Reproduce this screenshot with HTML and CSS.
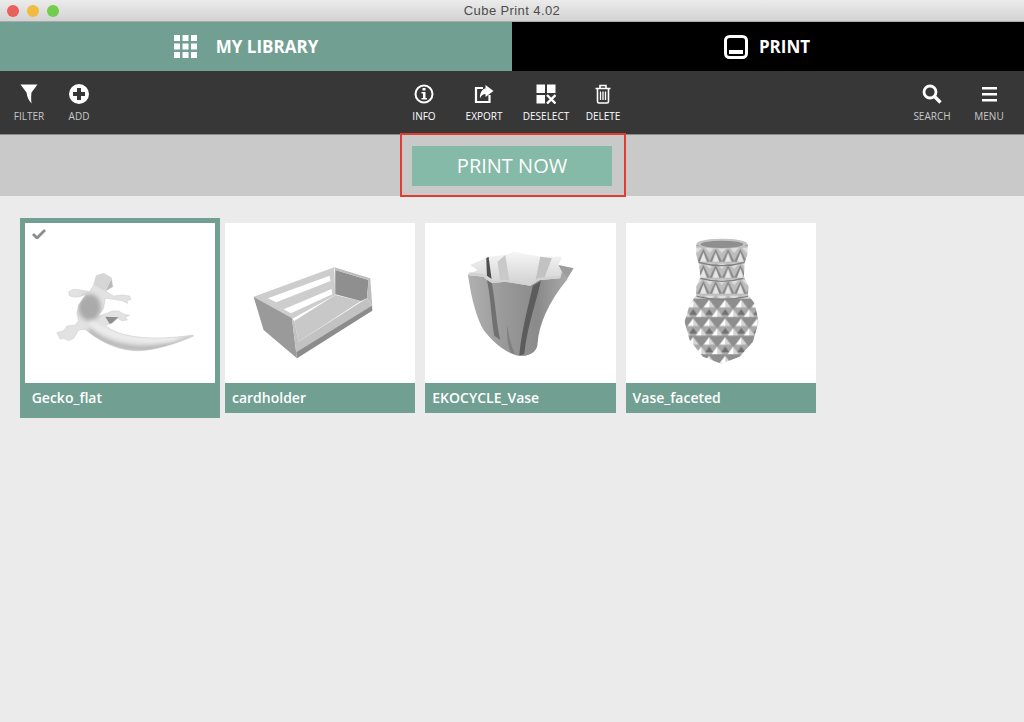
FILE: index.html
```html
<!DOCTYPE html>
<html lang="en">
<head>
    <meta charset="UTF-8">
    <title>Cube Print 4.02</title>
    <link rel="stylesheet" href="styles.css">
</head>
<body>
    <!-- Title bar -->
    <div class="titlebar">
        <div class="lights">
            <span class="light red"></span>
            <span class="light yellow"></span>
            <span class="light green"></span>
        </div>
        <div class="title">Cube Print 4.02</div>
    </div>

    <!-- Tabs -->
    <div class="tabs">
        <div class="tab tab-library">
            <svg class="tab-icon" width="23" height="23" viewBox="0 0 23 23" fill="#fff">
                <rect x="0" y="0" width="6" height="6"/><rect x="8.5" y="0" width="6" height="6"/><rect x="17" y="0" width="6" height="6"/>
                <rect x="0" y="8.500" width="6" height="6"/><rect x="8.5" y="8.500" width="6" height="6"/><rect x="17" y="8.500" width="6" height="6"/>
                <rect x="0" y="17" width="6" height="6"/><rect x="8.5" y="17" width="6" height="6"/><rect x="17" y="17" width="6" height="6"/>
            </svg>
            <span>MY LIBRARY</span>
        </div>
        <div class="tab tab-print">
            <svg class="tab-icon" width="24" height="24" viewBox="0 0 24 24">
                <rect x="1.500" y="1.500" width="21" height="21" rx="4" fill="none" stroke="#fff" stroke-width="3"/>
                <rect x="5" y="15" width="14" height="4" fill="#fff"/>
            </svg>
            <span>PRINT</span>
        </div>
    </div>

    <!-- Toolbar -->
    <div class="toolbar">
        <div class="tool-group">
            <div class="tool">
                <svg width="18" height="20" viewBox="0 0 18 20" fill="#fff"><path d="M0.500 0.500H17.500L11.500 8.500C11 12 11 16 11.500 19.500C9 17 7 13 6.500 8.500Z"/></svg>
                <span>FILTER</span>
            </div>
            <div class="tool">
                <svg width="20" height="20" viewBox="0 0 20 20"><circle cx="10" cy="10" r="10" fill="#fff"/><path d="M8 4H12V8H16V12H12V16H8V12H4V8H8Z" fill="#373737"/></svg>
                <span>ADD</span>
            </div>
        </div>
        <div class="tool-group tool-group-center">
            <div class="tool tool-on">
                <svg width="20" height="20" viewBox="0 0 20 20"><circle cx="10" cy="10" r="8.500" fill="none" stroke="#fff" stroke-width="2"/><rect x="8.500" y="4" width="3" height="2.500" fill="#fff"/><path d="M7.500 8H11.500V14H13V15.500H7.500V14H9V9.500H7.500Z" fill="#fff"/></svg>
                <span>INFO</span>
            </div>
            <div class="tool tool-on">
                <svg width="20" height="20" viewBox="0 0 20 20"><path d="M9 4H2V18H15.500V11" fill="none" stroke="#fff" stroke-width="2.200"/><path d="M11.500 1L19.500 7L11.500 13V10C9 10 7 11.500 6 14.500C5.500 9.500 8 5 11.500 4.500Z" fill="#fff"/></svg>
                <span>EXPORT</span>
            </div>
            <div class="tool tool-wide tool-on">
                <svg width="20" height="20" viewBox="0 0 20 20" fill="#fff"><rect x="0.500" y="0.500" width="8.500" height="8.500"/><rect x="11" y="0.500" width="8.500" height="8.500"/><rect x="0.500" y="11" width="8.500" height="8.500"/><path d="M11 11L19.500 19.500M19.500 11L11 19.500" stroke="#fff" stroke-width="2.400"/></svg>
                <span>DESELECT</span>
            </div>
            <div class="tool tool-narrow tool-on">
                <svg width="16" height="20" viewBox="0 0 16 20"><path d="M0.500 4.500H15.500M5 4V1.500H11V4" fill="none" stroke="#fff" stroke-width="1.600"/><path d="M2.500 5V17.500Q2.500 19 4 19H12Q13.500 19 13.500 17.500V5" fill="none" stroke="#fff" stroke-width="1.600"/><path d="M5.500 7.500V16M8 7.500V16M10.500 7.500V16" stroke="#fff" stroke-width="1.300"/></svg>
                <span>DELETE</span>
            </div>
        </div>
        <div class="tool-group tool-group-right">
            <div class="tool tool-wide">
                <svg width="20" height="20" viewBox="0 0 20 20"><circle cx="8" cy="8" r="6" fill="none" stroke="#fff" stroke-width="2.800"/><path d="M12.500 12.500L18.500 18.500" stroke="#fff" stroke-width="3.400"/></svg>
                <span>SEARCH</span>
            </div>
            <div class="tool tool-narrow">
                <svg width="15" height="20" viewBox="0 0 15 20" fill="#fff"><rect y="3" width="15" height="2.500"/><rect y="9" width="15" height="2.500"/><rect y="15" width="15" height="2.500"/></svg>
                <span>MENU</span>
            </div>
        </div>
    </div>

    <!-- Print banner -->
    <div class="banner">
        <button class="print-now">PRINT NOW</button>
        <div class="callout"></div>
    </div>

    <!-- Models -->
    <div class="library">
        <div class="card selected">
            <div class="thumb">
                <svg class="check" width="14" height="11" viewBox="0 0 14 11"><path d="M1 6L5 10L13 2" fill="none" stroke="#8c8c8c" stroke-width="2.800"/></svg>
                <svg class="model" viewBox="45 39 570 480">
                    <defs>
                        <filter id="soft" x="-10%" y="-10%" width="120%" height="120%"><feGaussianBlur stdDeviation="1.300"/></filter>
                        <filter id="softer" x="-30%" y="-30%" width="160%" height="160%"><feGaussianBlur stdDeviation="6"/></filter>
                        <path id="gecko-path" d="M258 197L280 190L303 203L308 230L285 243L310 258L335 255L358 258L362 268L350 272L352 280L335 272L310 268L285 265L280 295L265 318L290 310L305 303L325 303L340 312L358 316L345 322L352 330L335 332L322 325L305 340L285 345C320 380 420 395 548 375L550 378C490 405 420 425 370 422C310 418 255 385 225 358L205 360L190 385L175 392L160 385L150 388L140 368L160 362L170 348L195 345L205 332L200 310L205 285L225 255L232 250L215 258L195 262L178 258L175 245L190 238L210 240L238 245L250 225Z"/>
                        <clipPath id="gecko-shape"><use href="#gecko-path"/></clipPath>
                    </defs>
                    <g clip-path="url(#gecko-shape)">
                        <rect x="130" y="180" width="430" height="250" fill="#e2e2e2"/>
                        <ellipse cx="238" cy="292" rx="34" ry="40" fill="#aaa" filter="url(#softer)"/>
                        <path d="M235 360C300 420 420 435 550 385" fill="none" stroke="#a8a8a8" stroke-width="12" filter="url(#softer)"/>
                        <path d="M240 335C290 380 380 395 500 385" fill="none" stroke="#f6f6f6" stroke-width="8" filter="url(#softer)"/>
                        <path d="M285 245L305 205L308 235Z" fill="#b9b9b9"/>
                        <path d="M285 320L300 345L325 322Z" fill="#8d8d8d" filter="url(#soft)"/>
                        <path d="M258 197L280 190L303 203L285 243L250 225Z" fill="#d6d6d6" filter="url(#soft)"/>
                    </g>
                    <use href="#gecko-path" fill="none" stroke="#c8c8c8" stroke-width="1.500"/>
                </svg>
            </div>
            <div class="card-name">Gecko_flat</div>
        </div>
        <div class="card">
            <div class="thumb">
                <svg class="model" viewBox="15 24 570 480">
                    <g filter="url(#soft)">
                        <path d="M100 245L342 157L345 240L215 312Z" fill="#cdcdcd"/>
                        <path d="M143 250L328 182L331 198L168 262Z" fill="#fff"/>
                        <path d="M190 283L334 222L336 238L212 295Z" fill="#fff"/>
                        <path d="M222 318L345 240L422 258L235 380Z" fill="#c8c8c8"/>
                        <path d="M345 165L445 195L440 250L422 258L345 238Z" fill="#8f8f8f"/>
                        <path d="M342 157L450 190L456 272L440 250L445 195L345 165Z" fill="#bdbdbd"/>
                        <path d="M100 245L215 310L230 430L130 345Z" fill="#9a9a9a"/>
                        <path d="M215 310L222 318L235 380L440 250L456 272L456 285L230 430Z" fill="#c2c2c2"/>
                        <path d="M230 430L228 412L455 272L456 287Z" fill="#8c8c8c"/>
                    </g>
                </svg>
            </div>
            <div class="card-name">cardholder</div>
        </div>
        <div class="card">
            <div class="thumb">
                <svg class="model" viewBox="15 24 570 480">
                    <defs>
                        <linearGradient id="vase-side" x1="0" y1="0" x2="1" y2="0"><stop offset="0" stop-color="#b0b0b0"/><stop offset="0.350" stop-color="#9a9a9a"/><stop offset="0.700" stop-color="#8a8a8a"/><stop offset="1" stop-color="#aaa"/></linearGradient>
                        <linearGradient id="vase-inner" x1="0" y1="0" x2="0" y2="1"><stop offset="0" stop-color="#f6f6f6"/><stop offset="1" stop-color="#d0d0d0"/></linearGradient>
                    </defs>
                    <g filter="url(#soft)">
                        <path d="M150 150L205 125L255 120L280 110L360 125L425 125L415 150L460 160L440 192L400 190L355 195L330 212L255 200L210 205L190 185L143 180L172 165Z" fill="url(#vase-inner)"/>
                        <path d="M205 125L214 192L200 182L198 130Z" fill="#4f4f4f"/>
                        <path d="M255 120L268 200L240 202L232 140Z" fill="#c9c9c9"/>
                        <path d="M360 125L345 200L372 190L395 130Z" fill="#c2c2c2"/>
                        <path d="M415 150L460 160L440 192L425 170Z" fill="#9d9d9d"/>
                        <path d="M143 180L190 185L210 205L255 200L330 212L358 195L420 190L425 170L442 192C385 260 355 330 352 385C352 405 335 425 300 423C265 420 220 385 190 345C170 310 155 260 143 180Z" fill="url(#vase-side)"/>
                        <path d="M143 180L190 185L210 205L255 200L330 212L358 195L420 190L420 183L355 188L330 205L255 194L210 198L192 178L148 172Z" fill="#d2d2d2"/>
                        <path d="M200 195L215 205C225 260 228 320 240 375L222 362C212 300 212 250 200 195Z" fill="#707070"/>
                        <path d="M338 212L362 198C345 270 320 340 312 418L297 421C305 340 325 270 338 212Z" fill="#5c5c5c"/>
                        <path d="M262 330C265 370 275 395 285 418L272 413C262 390 258 360 262 330Z" fill="#808080"/>
                    </g>
                </svg>
            </div>
            <div class="card-name">EKOCYCLE_Vase</div>
        </div>
        <div class="card">
            <div class="thumb">
                <svg class="model" viewBox="15 24 570 480">
                    <defs>
                        <pattern id="facets-neck" x="228" y="98" width="37" height="48" patternUnits="userSpaceOnUse">
                            <rect width="37" height="48" fill="#bdbdbd"/>
                            <path d="M18.500 4L37 42H0Z" fill="#858585"/>
                            <path d="M18.500 14L29 42H8Z" fill="#e6e6e6"/>
                            <path d="M0 0H14L0 16ZM37 0H23L37 16Z" fill="#dedede"/>
                        </pattern>
                        <pattern id="facets-belly" x="192" y="252" width="48" height="56" patternUnits="userSpaceOnUse">
                            <rect width="48" height="56" fill="#8e8e8e"/>
                            <path d="M24 2V26H6Z" fill="#fff"/>
                            <path d="M24 2L42 26H24Z" fill="#d6d6d6"/>
                            <path d="M0 30L18 54H0Z" fill="#d6d6d6"/>
                            <path d="M48 30V54H30Z" fill="#fff"/>
                            <path d="M6 26H42L48 30L30 54L24 56L18 54L0 30Z" fill="#a8a8a8"/>
                            <path d="M24 30L36 48H12Z" fill="#6f6f6f"/>
                        </pattern>
                        <clipPath id="vase-shape">
                            <path d="M225 88L380 88L378 120L370 145L368 185L382 215L380 240L400 265L412 320L395 380L355 425L300 446L245 425L205 375L190 320L205 270L225 240L225 215L238 185L232 145L225 120Z"/>
                        </clipPath>
                    </defs>
                    <g filter="url(#soft)">
                        <g clip-path="url(#vase-shape)">
                            <rect x="180" y="80" width="240" height="170" fill="url(#facets-neck)"/>
                            <rect x="180" y="250" width="240" height="200" fill="url(#facets-belly)"/>
                        </g>
                        <path d="M232 142Q302 162 370 142M238 190Q302 208 366 190M226 244Q302 262 380 244" fill="none" stroke="#808080" stroke-width="4"/>
                        <ellipse cx="302" cy="86" rx="76" ry="15" fill="#c4c4c4"/>
                        <ellipse cx="302" cy="88" rx="64" ry="11" fill="#8f8f8f"/>
                    </g>
                </svg>
            </div>
            <div class="card-name">Vase_faceted</div>
        </div>
    </div>
</body>
</html>
```

FILE: styles.css
```css
html, body {
    height: 100%;
}
body {
    margin: 0;
    font-family: "Open Sans", Arial, sans-serif;
    background-color: #ebebeb;
    overflow: hidden;
}
.titlebar {
    height: 21px;
    border-bottom: 1px solid #a9a9a9;
    background: linear-gradient(#ebebeb, #d3d3d3);
    display: flex;
    align-items: center;
    position: relative;
}
.lights {
    display: flex;
    gap: 8px;
    padding-left: 7px;
}
.light {
    width: 12px;
    height: 12px;
    border-radius: 50%;
}
.red {
    background-color: #e8605a;
}
.yellow {
    background-color: #f0bb3e;
}
.green {
    background-color: #72cc4e;
}
.title {
    position: absolute;
    left: 0;
    right: 0;
    text-align: center;
    font-family: "Liberation Sans", Arial, sans-serif;
    font-size: 13px;
    letter-spacing: 0.4px;
    color: #4c4c4c;
}
.tabs {
    display: flex;
    height: 49px;
}
.tab {
    width: 50%;
    display: flex;
    justify-content: center;
    align-items: center;
    color: #fff;
    font-size: 17px;
    font-weight: 700;
    box-sizing: border-box;
}
.tab-library {
    background-color: #719f91;
    gap: 19px;
    padding-right: 20px;
}
.tab-print {
    background-color: #000;
    gap: 11px;
    padding-right: 2px;
}
.toolbar {
    height: 63px;
    border-bottom: 1px solid #8a8a8a;
    background-color: #373737;
    display: grid;
    grid-template-columns: 1fr auto 1fr;
}
.tool-group {
    display: flex;
    padding-left: 4px;
}
.tool-group-center {
    padding-left: 0;
    padding-right: 2px;
}
.tool-group-right {
    justify-content: flex-end;
    padding-left: 0;
    padding-right: 10px;
}
.tool {
    width: 50px;
    height: 100%;
    display: flex;
    flex-direction: column;
    align-items: center;
    color: #c9c9c9;
    font-size: 10px;
    padding-top: 13px;
    box-sizing: border-box;
}
.tool svg {
    height: 20px;
    margin-bottom: 5px;
}
.tool span {
    line-height: 14px;
}
.tool-group-center .tool {
    width: 60px;
}
.tool-group .tool-wide {
    width: 64px;
}
.tool-group .tool-narrow {
    width: 50px;
}
.tool-on {
    color: #fff;
}
.banner {
    height: 61px;
    background-color: #c9c9c9;
    display: flex;
    justify-content: center;
    align-items: center;
    position: relative;
}
.print-now {
    width: 200px;
    height: 40px;
    border: none;
    padding: 0;
    background-color: #85b9a8;
    color: #fff;
    font-family: "Open Sans", Arial, sans-serif;
    font-size: 20px;
}
.callout {
    position: absolute;
    left: 400px;
    top: -2px;
    width: 222px;
    height: 60px;
    border: 2px solid #e03c31;
}
.library {
    display: flex;
    gap: 9.8px;
    padding: 27px 0 0 24.7px;
}
.card {
    width: 190.5px;
}
.card.selected {
    box-shadow: 0 0 0 5px #719f91;
}
.thumb {
    height: 160px;
    background-color: #fff;
    position: relative;
}
.model {
    display: block;
    width: 100%;
    height: 160px;
}
.check {
    position: absolute;
    left: 7px;
    top: 5px;
}
.card-name {
    height: 30px;
    line-height: 30px;
    padding-left: 7px;
    background-color: #719f91;
    color: #fff;
    font-size: 14px;
    font-weight: 600;
}
```
